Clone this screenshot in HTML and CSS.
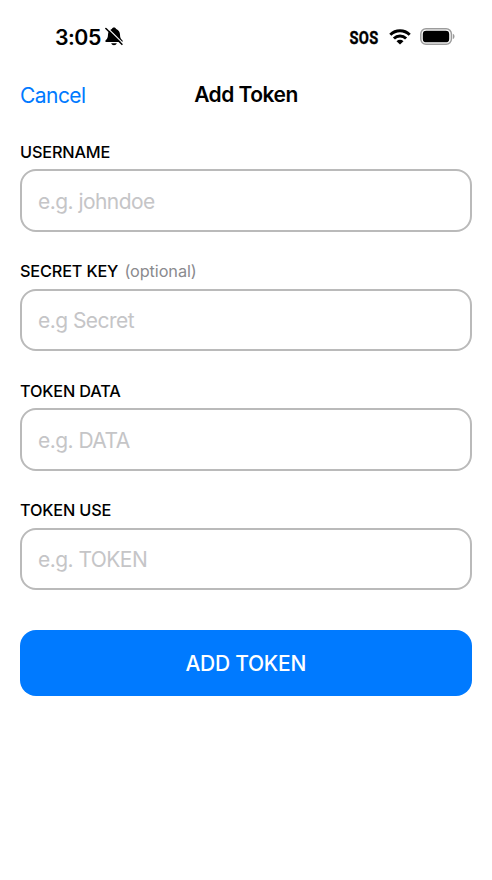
FILE: index.html
```
<!DOCTYPE html>
<html lang="en">
<head>
<meta charset="utf-8">
<meta name="viewport" content="width=device-width, initial-scale=1">
<title>Add Token</title>
<link rel="stylesheet" href="styles.css">
</head>
<body>
<div class="status">
  <div class="status-left">
    <span class="time">3:05</span>
    <svg class="bell" width="18" height="19" viewBox="0 0 18 19">
      <path d="M9 .5c-1.100 0-1.900.6-2.200 1.500C4.300 3 3.100 5 3 7.500c-.1 3-.6 4.100-1.900 5.300-.7.700-.9 1.200-.7 1.700.2.400.6.600 1.200.6h14.800c.6 0 1-.2 1.200-.6.2-.5 0-1-.7-1.700-1.300-1.200-1.800-2.300-1.900-5.300-.1-2.500-1.300-4.500-3.800-5.500C10.900 1.100 10.100.5 9 .5zM6.200 16.200h5.600c-.3 1.200-1.500 2-2.800 2s-2.500-.8-2.800-2z"/>
      <path d="M2.400.9 18.200 16.500" stroke="#fff" stroke-width="1.300"/>
      <path d="M.9 1.500 16.900 17.300" stroke="#000" stroke-width="1.600" stroke-linecap="round"/>
    </svg>
  </div>
  <div class="status-right">
    <span class="sos">SOS</span>
    <svg class="wifi" width="22" height="16" viewBox="0 0 22 16">
      <g fill="none" stroke="#000" stroke-width="3">
        <path d="M1.300 5.700a13.900 13.900 0 0 1 19.400 0"/>
        <path d="M4.900 9.500a8.700 8.700 0 0 1 12.200 0"/>
      </g>
      <path d="M11 15.600 7.500 12.200a4.900 4.900 0 0 1 7 0z"/>
    </svg>
    <svg class="battery" width="35" height="17" viewBox="0 0 35 17">
      <rect x=".8" y=".8" width="30.600" height="15.400" rx="5.200" fill="none" stroke="#9c9c9c" stroke-width="1.500"/>
      <rect x="2.800" y="2.700" width="26.400" height="11.600" rx="3.400"/>
      <path d="M32.900 5.800c1 .4 1.600 1.400 1.600 2.600s-.6 2.200-1.600 2.600z" fill="#9c9c9c"/>
    </svg>
  </div>
</div>
<header class="nav">
  <a class="cancel">Cancel</a>
  <h1 class="title">Add Token</h1>
</header>
<form class="form">
  <div class="field">
    <label class="label" for="username">USERNAME</label>
    <input class="input" id="username" type="text" placeholder="e.g. johndoe">
  </div>
  <div class="field">
    <label class="label" for="secret">SECRET KEY <span class="optional">(optional)</span></label>
    <input class="input" id="secret" type="text" placeholder="e.g Secret">
  </div>
  <div class="field">
    <label class="label" for="data">TOKEN DATA</label>
    <input class="input" id="data" type="text" placeholder="e.g. DATA">
  </div>
  <div class="field">
    <label class="label" for="use">TOKEN USE</label>
    <input class="input" id="use" type="text" placeholder="e.g. TOKEN">
  </div>
  <button class="submit" type="button">ADD TOKEN</button>
</form>
</body>
</html>
```
FILE: styles.css
```
* { box-sizing: border-box; }
body {
  margin: 0;
  min-height: 880px;
  background: #fff;
  color: #000;
  font-family: Inter, "Liberation Sans", sans-serif;
}
.status {
  display: flex;
  justify-content: space-between;
  align-items: center;
  height: 73px;
  padding: 0 37px 0 55px;
}
.status-left, .status-right { display: flex; align-items: center; }
.time { font-size: 21.300px; font-weight: 600; letter-spacing: -.5px; }
.bell { margin-left: 4px; }
.sos {
  padding-top: 1px;
  font-family: Roboto, sans-serif;
  font-size: 19px;
  font-weight: 700;
  letter-spacing: .3px;
  -webkit-text-stroke: .4px #000;
  transform: scaleX(.77);
  transform-origin: right center;
}
.wifi { margin: 0 9px 0 11px; }
.nav {
  display: grid;
  grid-template-columns: 1fr auto 1fr;
  align-items: center;
  height: 44px;
  padding: 0 20px 1px;
}
.cancel {
  padding-top: 1px;
  color: #007aff;
  font-size: 21px;
  letter-spacing: -.55px;
}
.title {
  margin: 0;
  padding-bottom: 1px;
  font-size: 21px;
  font-weight: 600;
  letter-spacing: -.5px;
}
.form {
  display: flex;
  flex-direction: column;
  padding: 25px 20px 0;
}
.field { height: 119.500px; }
.label {
  display: block;
  height: 27px;
  font-size: 16.300px;
  line-height: 20px;
  font-weight: 500;
  letter-spacing: -.17px;
}
.field:nth-child(even) .label { line-height: 19px; }
.optional { margin-left: 2px; color: #8a8a8e; font-weight: 400; letter-spacing: -.1px; }
.input {
  display: block;
  width: 451.500px;
  height: 62.500px;
  padding: 2px 16px 0;
  border: 2px solid #bababa;
  border-radius: 16px;
  background: #fff;
  font: 400 21px Inter, "Liberation Sans", sans-serif;
  letter-spacing: -.55px;
  outline: none;
}
.input::placeholder { color: #c5c5c7; opacity: 1; }
.submit {
  width: 451.500px;
  height: 65.500px;
  margin-top: 10px;
  padding: 2px 0 0;
  border: 0;
  border-radius: 16px;
  background: #007aff;
  color: #fff;
  font: 500 21px Inter, "Liberation Sans", sans-serif;
  letter-spacing: -.25px;
}
```
